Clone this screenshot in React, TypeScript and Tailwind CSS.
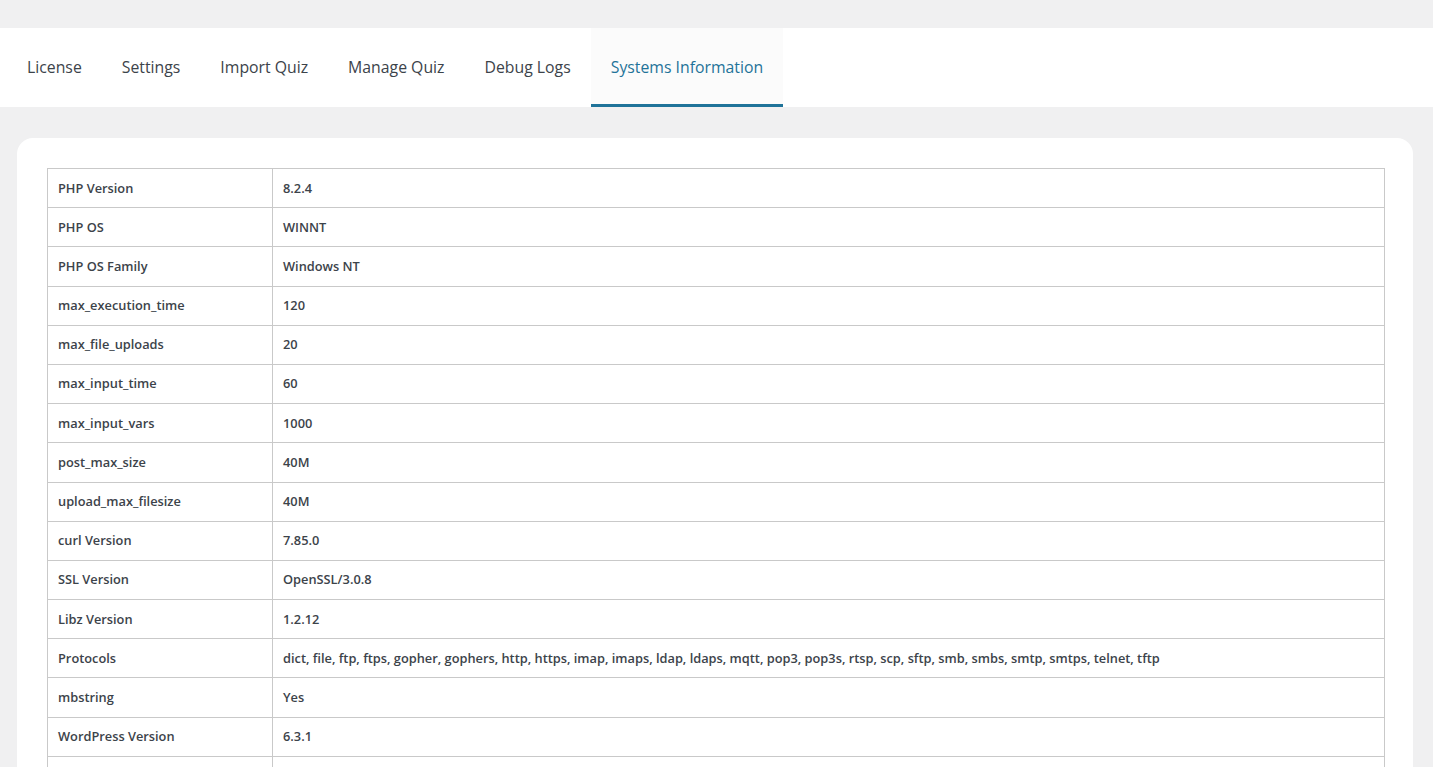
import React from "react";

const tabs = ["License", "Settings", "Import Quiz", "Manage Quiz", "Debug Logs", "Systems Information"];

const rows: [string, string][] = [
  ["PHP Version", "8.2.4"],
  ["PHP OS", "WINNT"],
  ["PHP OS Family", "Windows NT"],
  ["max_execution_time", "120"],
  ["max_file_uploads", "20"],
  ["max_input_time", "60"],
  ["max_input_vars", "1000"],
  ["post_max_size", "40M"],
  ["upload_max_filesize", "40M"],
  ["curl Version", "7.85.0"],
  ["SSL Version", "OpenSSL/3.0.8"],
  ["Libz Version", "1.2.12"],
  [
    "Protocols",
    "dict, file, ftp, ftps, gopher, gophers, http, https, imap, imaps, ldap, ldaps, mqtt, pop3, pop3s, rtsp, scp, sftp, smb, smbs, smtp, smtps, telnet, tftp",
  ],
  ["mbstring", "Yes"],
  ["WordPress Version", "6.3.1"],
  ["", ""],
];

export default function App() {
  return (
    <div
      className="w-[1433px] h-[767px] overflow-hidden bg-[#f0f0f1] text-[#3c434a]"
      style={{ fontFamily: '"Open Sans", "Noto Sans", sans-serif' }}
    >
      <div className="h-[28px]" />
      <div className="h-[79px] bg-white flex pl-[7px]">
        {tabs.map((t) => {
          const active = t === "Systems Information";
          return (
            <div
              key={t}
              className={
                active
                  ? "px-5 flex items-center text-[15.8px] text-[#1f7399] bg-[#fbfbfb] border-b-[3px] border-[#1f7399] pt-[3px]"
                  : "px-5 flex items-center text-[15.8px] text-[#3c434a]"
              }
            >
              {t}
            </div>
          );
        })}
      </div>
      <div className="pt-[31px] pl-[17px] pr-[20px]">
        <div className="bg-white rounded-[16px] pt-[30px] pl-[30px] pr-[28px] pb-[30px]">
          <table className="w-full border-collapse text-[12.8px] font-semibold text-[#3c434a]">
            <tbody>
              {rows.map(([k, v], i) => (
                <tr key={i} className="h-[39.2px]">
                  <td className="w-[225px] border border-[#c9c9c9] px-[10px] align-middle">{k}</td>
                  <td className="border border-[#c9c9c9] px-[10px] align-middle">{v}</td>
                </tr>
              ))}
            </tbody>
          </table>
        </div>
      </div>
    </div>
  );
}
